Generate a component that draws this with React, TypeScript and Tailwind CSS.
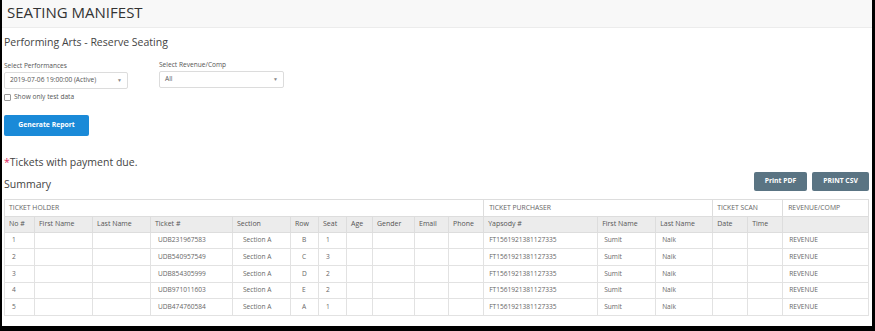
import React from 'react';

const cols = [
  { key: 'no', label: 'No #', w: 30, pad: 'pl-[7px]' },
  { key: 'first', label: 'First Name', w: 58, pad: 'pl-[7px]' },
  { key: 'last', label: 'Last Name', w: 58, pad: 'pl-[7px]' },
  { key: 'ticket', label: 'Ticket #', w: 82, pad: 'pl-[7px]' },
  { key: 'section', label: 'Section', w: 58, pad: 'pl-[10px]' },
  { key: 'row', label: 'Row', w: 28, pad: 'pl-[11px]' },
  { key: 'seat', label: 'Seat', w: 28, pad: 'pl-[7px]' },
  { key: 'age', label: 'Age', w: 26, pad: 'pl-[7px]' },
  { key: 'gender', label: 'Gender', w: 42, pad: 'pl-[7px]' },
  { key: 'email', label: 'Email', w: 34, pad: 'pl-[7px]' },
  { key: 'phone', label: 'Phone', w: 35, pad: 'pl-[7px]' },
  { key: 'yapsody', label: 'Yapsody #', w: 114, pad: 'pl-[5px]' },
  { key: 'pfirst', label: 'First Name', w: 58, pad: 'pl-[6px]' },
  { key: 'plast', label: 'Last Name', w: 57, pad: 'pl-[6px]' },
  { key: 'date', label: 'Date', w: 35, pad: 'pl-[7px]' },
  { key: 'time', label: 'Time', w: 35, pad: 'pl-[7px]' },
  { key: 'rev', label: '', w: 86, pad: 'pl-[6px]' },
];

const rows = [
  { no: '1', ticket: 'UDB231967583', row: 'B', seat: '1' },
  { no: '2', ticket: 'UDB540957549', row: 'C', seat: '3' },
  { no: '3', ticket: 'UDB854305999', row: 'D', seat: '2' },
  { no: '4', ticket: 'UDB971011603', row: 'E', seat: '2' },
  { no: '5', ticket: 'UDB474760584', row: 'A', seat: '1' },
];

function cellValue(r: (typeof rows)[number], key: string) {
  switch (key) {
    case 'no': return r.no;
    case 'ticket': return r.ticket;
    case 'section': return 'Section A';
    case 'row': return r.row;
    case 'seat': return r.seat;
    case 'yapsody': return 'FT1561921381127335';
    case 'pfirst': return 'Sumit';
    case 'plast': return 'Naik';
    case 'rev': return 'REVENUE';
    default: return '';
  }
}

function FakeSelect({ value, width }: { value: string; width: string }) {
  return (
    <div className={`${width} h-[17px] border border-[#dcdcdc] rounded-[2px] bg-white flex items-center justify-between pl-[5px] pr-[5px]`}>
      <span className="text-[6.6px] text-[#555] leading-none">{value}</span>
      <span className="text-[5px] text-[#888] leading-none">▼</span>
    </div>
  );
}

export default function App() {
  return (
    <div className="w-[875px] h-[331px] bg-black overflow-hidden" style={{ fontFamily: '"Open Sans", "Noto Sans", sans-serif' }}>
      <div className="ml-[2px] mr-[3px] h-[326px] bg-white">
        {/* Header */}
        <div className="h-[28px] bg-[#f8f8f8] border-b border-[#ececec] flex items-center pl-[5px]">
          <h1 className="text-[15px] leading-none text-[#333] pb-[3px]">SEATING MANIFEST</h1>
        </div>

        <div className="px-[2px]">
          <h2 className="mt-[7px] text-[10.5px] leading-[14px] text-[#444]">Performing Arts - Reserve Seating</h2>

          {/* Filters */}
          <div className="mt-[13px] flex gap-[31px]">
            <div>
              <div className="text-[6.6px] leading-[8px] text-[#555]">Select Performances</div>
              <div className="mt-[2px]">
                <FakeSelect value="2019-07-06 19:00:00 (Active)" width="w-[124px]" />
              </div>
            </div>
            <div className="-mt-[1px]">
              <div className="text-[6.6px] leading-[8px] text-[#555]">Select Revenue/Comp</div>
              <div className="mt-[2px]">
                <FakeSelect value="All" width="w-[125px]" />
              </div>
            </div>
          </div>

          <div className="mt-[4px] flex items-center gap-[3px]">
            <span className="w-[7px] h-[7px] border border-[#999] rounded-[1px] bg-white" />
            <span className="text-[6.6px] leading-[8px] text-[#555]">Show only test data</span>
          </div>

          <button className="mt-[14px] w-[85px] h-[21px] bg-[#1a8ad8] rounded-[2px] text-white text-[6.8px] font-bold">
            Generate Report
          </button>

          <p className="mt-[19px] text-[10.5px] leading-[14px] text-[#444]">
            <span className="text-[#e0245e]">*</span>Tickets with payment due.
          </p>

          {/* Summary + actions */}
          <div className="mt-[3px] flex items-end justify-between pr-[1px]">
            <h3 className="text-[10.5px] leading-[14px] text-[#444]">Summary</h3>
            <div className="flex gap-[5px]">
              <button className="w-[53px] h-[19px] bg-[#5a7483] rounded-[2px] text-white text-[6.8px] font-bold">Print PDF</button>
              <button className="w-[57px] h-[19px] bg-[#5a7483] rounded-[2px] text-white text-[6.8px] font-bold">PRINT CSV</button>
            </div>
          </div>

          {/* Table */}
          <table className="mt-[8px] table-fixed border-collapse w-[864px] text-[#666]">
            <colgroup>
              {cols.map((c) => (
                <col key={c.key} style={{ width: c.w }} />
              ))}
            </colgroup>
            <thead>
              <tr className="h-[17px] text-[6.8px] text-[#666]">
                <th colSpan={11} className="border border-[#dddddd] text-left font-normal pl-[4px]">TICKET HOLDER</th>
                <th colSpan={3} className="border border-[#dddddd] text-left font-normal pl-[5px]">TICKET PURCHASER</th>
                <th colSpan={2} className="border border-[#dddddd] text-left font-normal pl-[4px]">TICKET SCAN</th>
                <th className="border border-[#dddddd] text-left font-normal pl-[5px]">REVENUE/COMP</th>
              </tr>
              <tr className="h-[15.5px] bg-[#ececec] text-[7px] text-[#555]">
                {cols.map((c) => (
                  <th key={c.key} className="border border-[#dddddd] text-left font-normal pl-[4px]">{c.label}</th>
                ))}
              </tr>
            </thead>
            <tbody>
              {rows.map((r) => (
                <tr key={r.no} className="h-[16.7px] text-[6.6px]">
                  {cols.map((c) => (
                    <td key={c.key} className={`border border-[#e2e2e2] ${c.pad}`}>{cellValue(r, c.key)}</td>
                  ))}
                </tr>
              ))}
            </tbody>
          </table>
        </div>
      </div>
    </div>
  );
}
